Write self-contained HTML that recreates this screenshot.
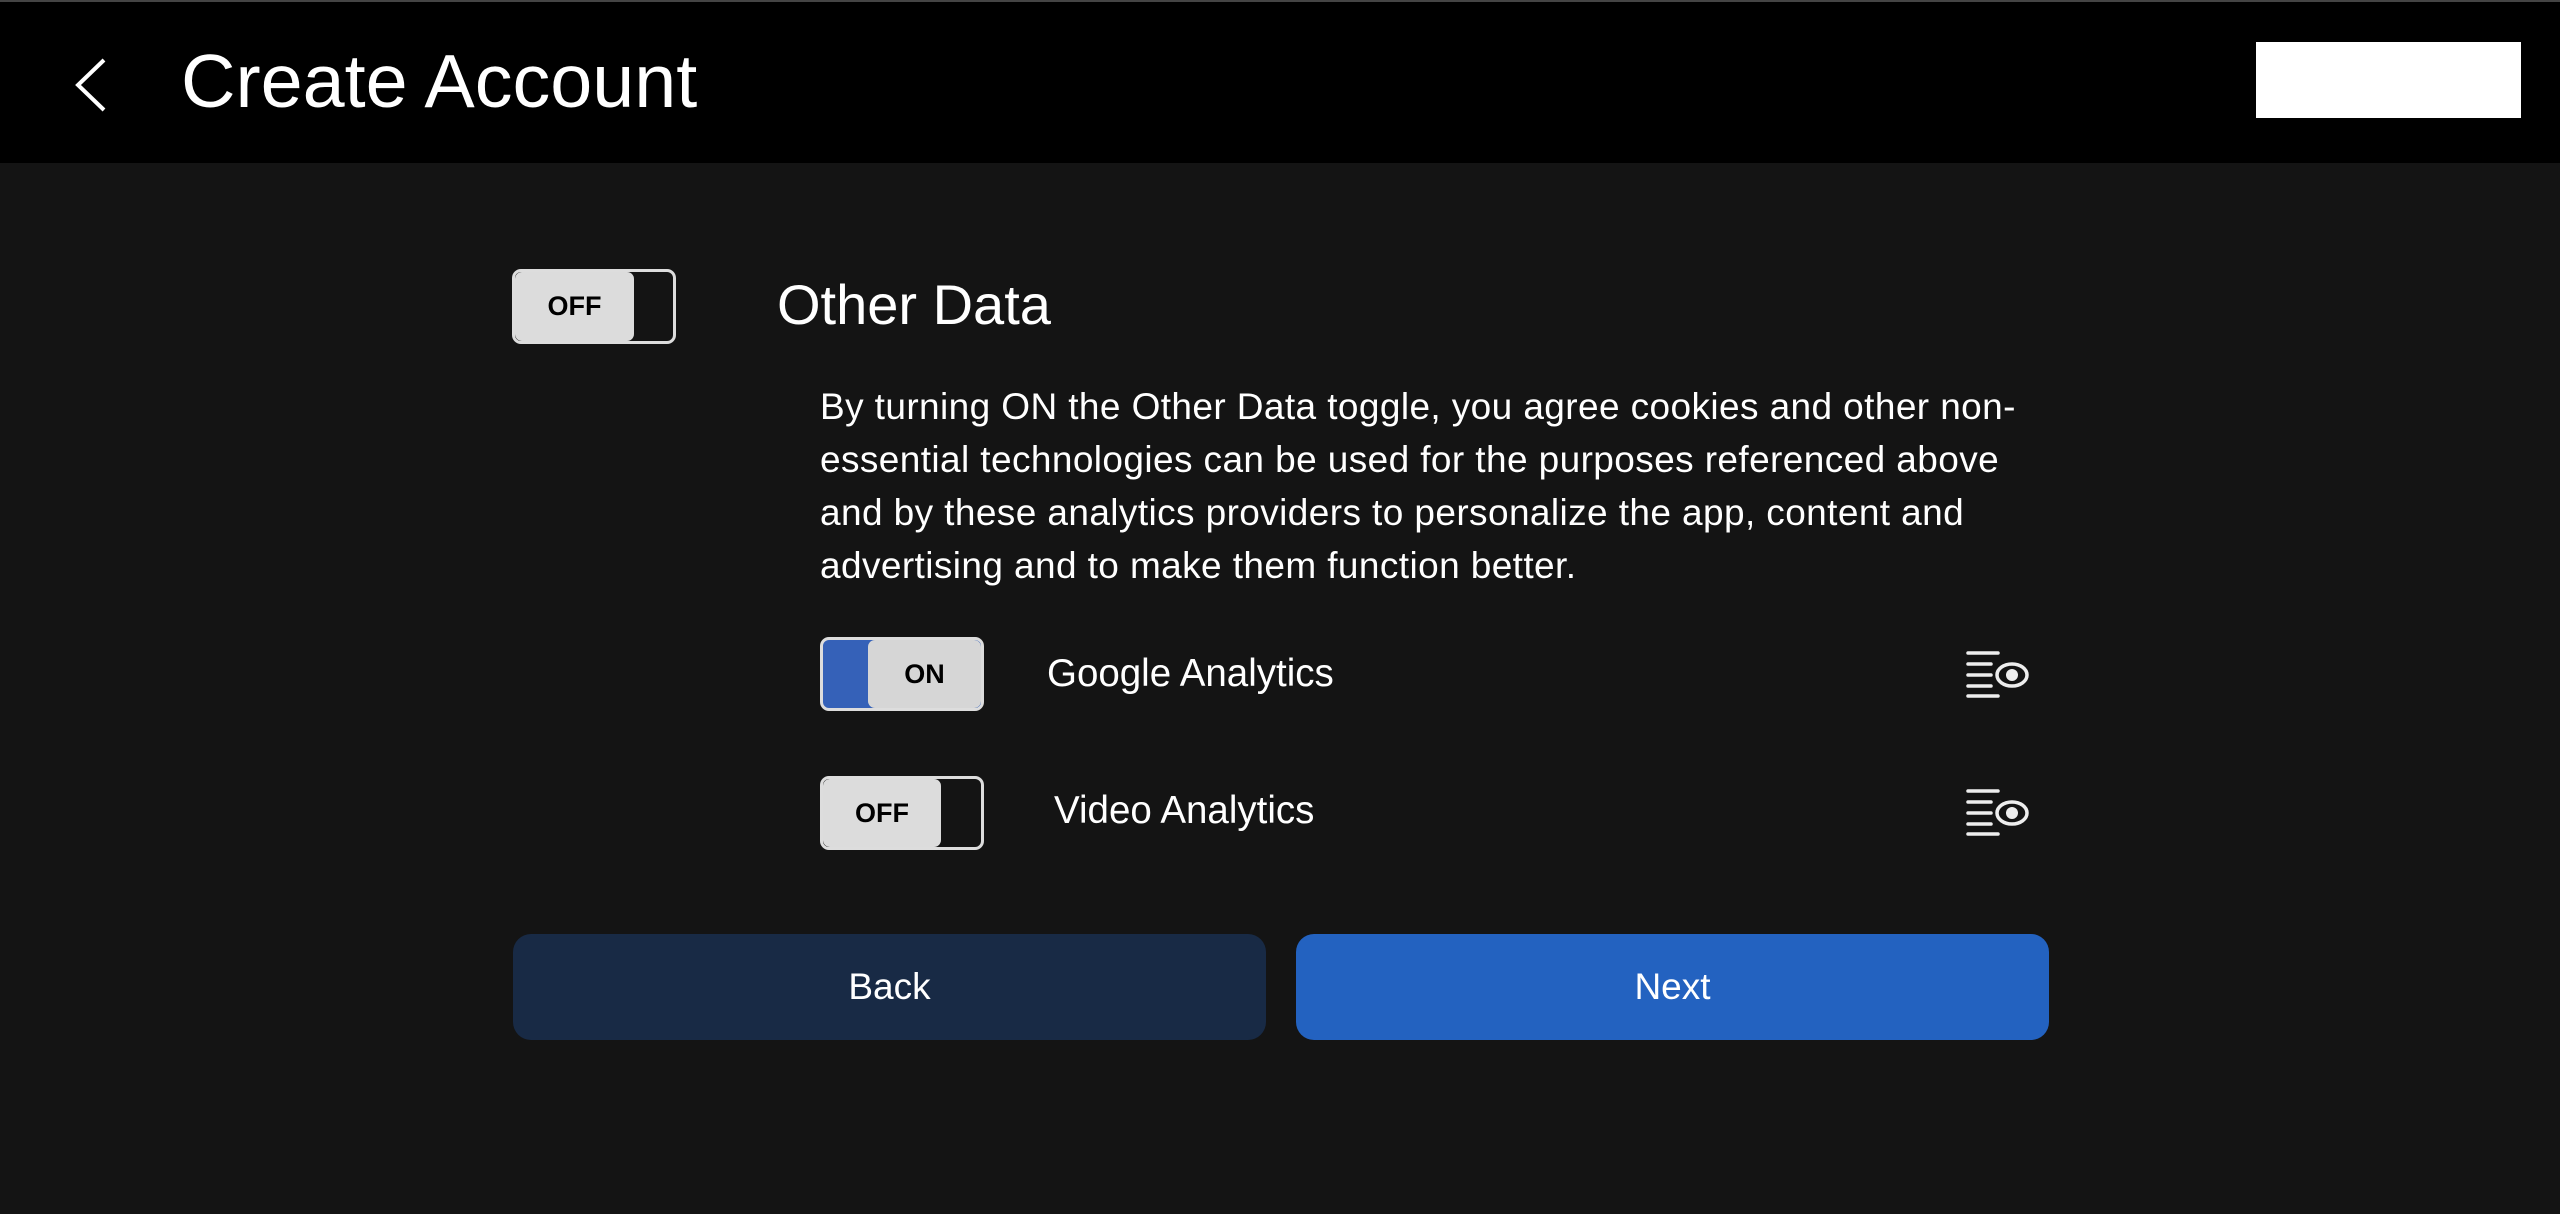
<!DOCTYPE html>
<html><head><meta charset="utf-8"><style>
body{margin:0;width:2560px;height:1214px;background:#141414;font-family:"Liberation Sans",sans-serif;color:#fff;position:relative;overflow:hidden}
.hdr{position:absolute;left:0;top:0;width:2560px;height:163px;background:#000;border-top:2px solid #444;box-sizing:border-box}
.a{position:absolute;white-space:nowrap}
.tg{position:absolute;border:3px solid #ddd;border-radius:9px;box-sizing:border-box;background:#141414;overflow:hidden}
.kn{position:absolute;top:0;bottom:0;background:#dcdcdc;border-radius:7px;color:#000;font-weight:bold;font-size:27px;display:flex;align-items:center;justify-content:center}
.btn{position:absolute;top:934px;height:106px;width:753px;border-radius:18px;font-size:37px;display:flex;align-items:center;justify-content:center}
.p{position:absolute;left:820px;top:380px;font-size:37px;letter-spacing:0.4px;line-height:53px;width:1400px;white-space:nowrap}
</style></head><body>
<div class="hdr">
<svg class="a" style="left:68px;top:52px" width="44" height="62" viewBox="0 0 44 62"><path d="M36 6 L10 31 L36 56" stroke="#fff" stroke-width="4" fill="none"/></svg>
<div class="a" style="left:181px;top:34px;font-size:75.5px;line-height:90px">Create Account</div>
<div class="a" style="left:2256px;top:40px;width:265px;height:76px;background:#fff"></div>
</div>
<div class="tg" style="left:512px;top:269px;width:164px;height:75px"><div class="kn" style="left:0;width:119px">OFF</div></div>
<div class="a" style="left:777px;top:272px;font-size:56px;line-height:66px">Other Data</div>
<div class="p">By turning ON the Other Data toggle, you agree cookies and other non-<br>essential technologies can be used for the purposes referenced above<br>and by these analytics providers to personalize the app, content and<br>advertising and to make them function better.</div>
<div class="tg" style="left:820px;top:637px;width:164px;height:74px;background:#3561b8;border-color:#ddd"><div class="kn" style="left:45px;right:0;background:#d6d6d6">ON</div></div>
<div class="a" style="left:1047px;top:650px;font-size:38.5px;line-height:48px">Google Analytics</div>
<div class="tg" style="left:820px;top:776px;width:164px;height:74px"><div class="kn" style="left:0;width:118px">OFF</div></div>
<div class="a" style="left:1054px;top:787px;font-size:38.5px;line-height:48px">Video Analytics</div>
<svg class="a" style="left:1964px;top:650px" width="66" height="48" viewBox="0 0 66 48"><g stroke="#eee" stroke-width="3.5" stroke-linecap="round" fill="none"><path d="M4 3H34M4 14H27M4 25H27M4 36H27M4 46H34"/><ellipse cx="48" cy="25" rx="15" ry="11"/></g><circle cx="48" cy="25" r="6" fill="#eee"/></svg>
<svg class="a" style="left:1964px;top:788px" width="66" height="48" viewBox="0 0 66 48"><g stroke="#eee" stroke-width="3.5" stroke-linecap="round" fill="none"><path d="M4 3H34M4 14H27M4 25H27M4 36H27M4 46H34"/><ellipse cx="48" cy="25" rx="15" ry="11"/></g><circle cx="48" cy="25" r="6" fill="#eee"/></svg>
<div class="btn" style="left:513px;background:#182a45">Back</div>
<div class="btn" style="left:1296px;background:#2362c0">Next</div>
</body></html>
